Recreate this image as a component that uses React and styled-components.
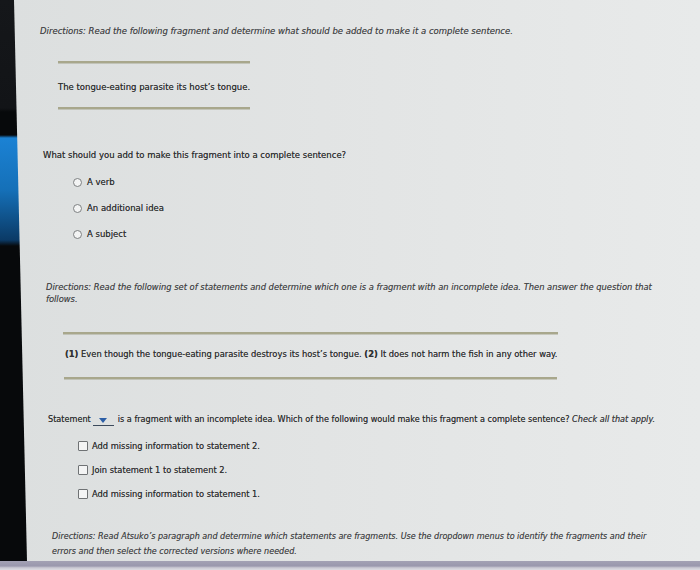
import React from "react";
import styled, { createGlobalStyle } from "styled-components";

const Global = createGlobalStyle`
  html, body { margin: 0; padding: 0; background: #0b0d10; }
  #root { width: 700px; height: 570px; overflow: hidden; background: #d6d5dc; }
`;

const Screen = styled.div`
  display: flex;
  height: 561px;
  background-color: #0b0d10;
  background-image:
    linear-gradient(180deg, transparent 135px, #1b82d4 138px, #1570b8 190px, #0b3a66 240px, transparent 246px),
    linear-gradient(180deg, #15171a 0px, #121417 108px, #07090b 112px, #07090b 100%);
  background-size: 22px 100%, 100% 100%;
  background-repeat: no-repeat;
`;

const Bezel = styled.div`
  width: 14px;
  flex: none;
`;

const Page = styled.main`
  flex: 1;
  display: flex;
  flex-direction: column;
  padding: 25px 0 0 0;
  background: linear-gradient(90deg, #dcdfdf 0%, #e2e4e4 45%, #e8eaea 100%);
  clip-path: polygon(0 0, 100% 0, 100% 100%, 13px 100%);
  font-family: "DejaVu Sans", Verdana, sans-serif;
  font-size: 8.5px;
  line-height: 12px;
  color: #363738;
`;

const BottomStrip = styled.div`
  height: 9px;
  background: linear-gradient(180deg, #a3a1b4 0%, #9a98ad 55%, #c9c8d2 75%, #dcdbe1 100%);
`;

const Directions = styled.p`
  margin: ${(p) => p.mt}px 0 0 ${(p) => p.indent}px;
  font-size: ${(p) => p.size || 8.5}px;
  line-height: ${(p) => p.lh || 12}px;
  font-style: italic;
  color: #434446;
  text-shadow: 0 0 0.4px rgba(50, 50, 50, 0.5);
`;

const Text = styled.p`
  margin: ${(p) => p.mt}px 0 0 ${(p) => p.indent}px;
  font-size: ${(p) => p.size || 8.5}px;
  color: #303132;
  text-shadow: 0 0 0.6px rgba(40, 40, 40, 0.7);
`;

const Rule = styled.div`
  margin: ${(p) => p.mt}px 0 0 ${(p) => p.indent}px;
  width: ${(p) => p.w}px;
  height: 2px;
  background: #a8a78c;
  box-shadow: 0 1px 0 rgba(140, 140, 110, 0.35);
`;

const OptionList = styled.div`
  display: flex;
  flex-direction: column;
  gap: ${(p) => p.gap}px;
  margin: ${(p) => p.mt}px 0 0 ${(p) => p.indent}px;
  font-size: ${(p) => p.size || 8.5}px;
`;

const Option = styled.label`
  display: flex;
  align-items: center;
  gap: ${(p) => p.gap}px;
  height: 12px;
  color: #303132;
  text-shadow: 0 0 0.6px rgba(40, 40, 40, 0.7);
`;

const Radio = styled.span`
  width: 7px;
  height: 7px;
  border-radius: 50%;
  border: 1px solid #7d8082;
  background: #f3f4f4;
  flex: none;
`;

const Check = styled.span`
  width: 8px;
  height: 8px;
  border-radius: 1px;
  border: 1px solid #6f7274;
  background: #f3f4f4;
  flex: none;
`;

const Dropdown = styled.span`
  display: inline-flex;
  justify-content: center;
  align-items: center;
  width: 21px;
  height: 9px;
  margin: 0 4px 0 2px;
  border-bottom: 1px solid #3c4a5c;
  vertical-align: -1px;
`;

const Caret = styled.span`
  width: 0;
  height: 0;
  border-left: 4px solid transparent;
  border-right: 4px solid transparent;
  border-top: 5px solid #2b5ea6;
`;

const Em = styled.i`
  color: #434446;
`;

export default function App() {
  return (
    <>
      <Global />
      <Screen>
        <Bezel />
        <Page>
          <Directions mt={0} indent={26}>
            Directions: Read the following fragment and determine what should be added to make it a complete sentence.
          </Directions>
          <Rule mt={24} indent={44} w={192} />
          <Text mt={18} indent={44}>The tongue-eating parasite its host’s tongue.</Text>
          <Rule mt={14} indent={44} w={192} />
          <Text mt={40} indent={29}>What should you add to make this fragment into a complete sentence?</Text>
          <OptionList mt={15} indent={59} gap={14}>
            <Option gap={5}><Radio />A verb</Option>
            <Option gap={5}><Radio />An additional idea</Option>
            <Option gap={5}><Radio />A subject</Option>
          </OptionList>
          <Directions mt={41} indent={32} size={8.35}>
            Directions: Read the following set of statements and determine which one is a fragment with an incomplete idea. Then answer the question that
            <br />
            follows.
          </Directions>
          <Rule mt={27} indent={49} w={495} />
          <Text mt={14} indent={51} size={8.35}>
            <b>(1)</b> Even though the tongue-eating parasite destroys its host’s tongue. <b>(2)</b> It does not harm the fish in any other way.
          </Text>
          <Rule mt={17} indent={50} w={493} />
          <Text mt={34} indent={34} size={8.15}>
            Statement<Dropdown><Caret /></Dropdown>is a fragment with an incomplete idea. Which of the following would make this fragment a complete sentence? <Em>Check all that apply.</Em>
          </Text>
          <OptionList mt={14} indent={64} gap={12} size={8.3}>
            <Option gap={4}><Check />Add missing information to statement 2.</Option>
            <Option gap={4}><Check />Join statement 1 to statement 2.</Option>
            <Option gap={4}><Check />Add missing information to statement 1.</Option>
          </OptionList>
          <Directions mt={29} indent={38} size={8.05} lh={15}>
            Directions: Read Atsuko’s paragraph and determine which statements are fragments. Use the dropdown menus to identify the fragments and their
            <br />
            errors and then select the corrected versions where needed.
          </Directions>
        </Page>
      </Screen>
      <BottomStrip />
    </>
  );
}
